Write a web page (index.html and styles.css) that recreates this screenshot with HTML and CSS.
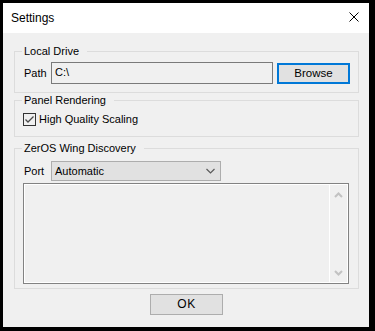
FILE: index.html
```html
<!DOCTYPE html>
<html>
<head>
<meta charset="utf-8">
<title>Settings</title>
<link rel="stylesheet" href="styles.css">
</head>
<body>
<div class="window">
  <div class="titlebar">
    <span class="title">Settings</span>
    <svg class="close" width="10" height="10" viewBox="0 0 10 10"><path d="M0.5 0.5 L9.5 9.5 M9.5 0.5 L0.5 9.5" stroke="#000" stroke-width="1" fill="none"/></svg>
  </div>
  <div class="content">
    <fieldset class="group group-drive">
      <legend class="legend">Local Drive</legend>
      <div class="row">
        <span class="label">Path</span>
        <div class="textbox">C:\</div>
        <div class="button button-focus">Browse</div>
      </div>
    </fieldset>
    <fieldset class="group group-render">
      <legend class="legend">Panel Rendering</legend>
      <div class="check-row">
        <span class="checkbox"><svg width="11" height="11" viewBox="0 0 11 11"><path d="M1.5 5.5 L4 8 L9.5 2.5" stroke="#4a4a4a" stroke-width="1.3" fill="none"/></svg></span>
        <span class="check-label">High Quality Scaling</span>
      </div>
    </fieldset>
    <fieldset class="group group-wing">
      <legend class="legend">ZerOS Wing Discovery</legend>
      <div class="row">
        <span class="label">Port</span>
        <div class="combo">
          <span>Automatic</span>
          <svg width="9" height="6" viewBox="0 0 9 6"><path d="M0.5 1 L4.5 5 L8.5 1" stroke="#5a5a5a" stroke-width="1.2" fill="none"/></svg>
        </div>
      </div>
      <div class="listbox">
        <div class="list-area"></div>
        <div class="scrollbar">
          <svg width="9" height="6" viewBox="0 0 9 6"><path d="M1 5 L4.5 1.5 L8 5" stroke="#c2c2c2" stroke-width="2" fill="none"/></svg>
          <svg width="9" height="6" viewBox="0 0 9 6"><path d="M1 1 L4.5 4.5 L8 1" stroke="#c2c2c2" stroke-width="2" fill="none"/></svg>
        </div>
      </div>
    </fieldset>
    <div class="footer">
      <div class="button ok">OK</div>
    </div>
  </div>
</div>
</body>
</html>
```
FILE: styles.css
```css
* { box-sizing: border-box; }

html, body {
  margin: 0;
  height: 331px;
  overflow: hidden;
}

body {
  background: #000;
  padding: 3px 6px 4px 3px;
  font-family: "Liberation Sans", Arial, sans-serif;
  font-size: 11px;
  color: #000;
}

.window {
  width: 366px;
  height: 324px;
  background: #f0f0f0;
  display: flex;
  flex-direction: column;
}

.titlebar {
  height: 30px;
  background: #fff;
  display: flex;
  align-items: center;
  justify-content: space-between;
  padding: 0 10px 0 8px;
  flex: none;
}

.title {
  font-size: 12px;
  line-height: 14px;
}

.close {
  display: block;
  margin-top: -2px;
}

.content {
  padding: 12px 10px 0 11px;
  display: flex;
  flex-direction: column;
}

.group {
  margin: 0;
  border: 1px solid #dcdcdc;
  padding: 0 8px 8px 9px;
  min-width: 0;
}

.legend {
  font-size: 11px;
  line-height: 13px;
  padding: 0 8px 0 2px;
  margin-left: -2px;
}

.group-drive .row {
  margin-top: 4px;
}

.group-render {
  margin-top: 1px;
  padding-bottom: 10px;
}

.group-wing {
  margin-top: 5px;
  padding-bottom: 4px;
}

.row {
  display: flex;
  align-items: center;
}

.label {
  width: 27px;
  flex: none;
  line-height: 13px;
}

.textbox {
  width: 222px;
  height: 22px;
  border: 1px solid #7a7a7a;
  background: #f0f0f0;
  padding: 3px 0 0 3px;
  line-height: 13px;
}

.button {
  height: 21px;
  width: 73px;
  background: #e1e1e1;
  border: 1px solid #adadad;
  display: flex;
  align-items: center;
  justify-content: center;
  line-height: 13px;
}

.button-focus {
  margin-left: 4px;
  border: 2px solid #0078d7;
  font-size: 11.5px;
}

.check-row {
  display: flex;
  align-items: center;
  margin-top: 6px;
  margin-left: -1px;
  height: 13px;
}

.checkbox {
  width: 13px;
  height: 13px;
  border: 1px solid #333;
  background: #f0f0f0;
  display: flex;
  align-items: center;
  justify-content: center;
  flex: none;
}

.checkbox svg {
  display: block;
}

.check-label {
  margin-left: 3px;
  line-height: 13px;
}

.group-wing .row {
  margin-top: 6px;
}

.combo {
  width: 170px;
  height: 20px;
  border: 1px solid #adadad;
  background: #e1e1e1;
  display: flex;
  align-items: center;
  justify-content: space-between;
  padding: 0 5px 0 3px;
  line-height: 13px;
}

.combo svg {
  display: block;
}

.listbox {
  margin-top: 2px;
  margin-left: -1px;
  width: 326px;
  height: 101px;
  border: 1px solid #828282;
  box-shadow: inset 0 0 0 1px #fff;
  display: flex;
}

.list-area {
  flex: 1;
}

.scrollbar {
  width: 18px;
  flex: none;
  border-left: 1px solid #fff;
  margin: 1px 1px 1px 0;
  display: flex;
  flex-direction: column;
  align-items: center;
  justify-content: space-between;
  padding: 7px 0 6px;
}

.scrollbar svg {
  display: block;
}

.footer {
  display: flex;
  justify-content: center;
  margin-top: 5px;
}

.ok {
  font-size: 12px;
  letter-spacing: 0.5px;
}
```
